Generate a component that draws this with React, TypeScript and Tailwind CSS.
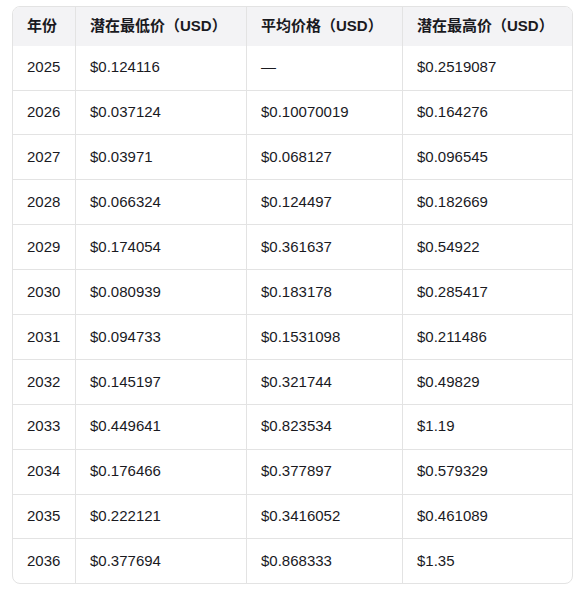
import React from "react";

const rows: [string, string, string, string][] = [
  ["2025", "$0.124116", "—", "$0.2519087"],
  ["2026", "$0.037124", "$0.10070019", "$0.164276"],
  ["2027", "$0.03971", "$0.068127", "$0.096545"],
  ["2028", "$0.066324", "$0.124497", "$0.182669"],
  ["2029", "$0.174054", "$0.361637", "$0.54922"],
  ["2030", "$0.080939", "$0.183178", "$0.285417"],
  ["2031", "$0.094733", "$0.1531098", "$0.211486"],
  ["2032", "$0.145197", "$0.321744", "$0.49829"],
  ["2033", "$0.449641", "$0.823534", "$1.19"],
  ["2034", "$0.176466", "$0.377897", "$0.579329"],
  ["2035", "$0.222121", "$0.3416052", "$0.461089"],
  ["2036", "$0.377694", "$0.868333", "$1.35"],
];

const headers = ["年份", "潜在最低价（USD）", "平均价格（USD）", "潜在最高价（USD）"];

export default function App() {
  return (
    <div
      className="bg-white w-[579px] h-[594px] pt-[6px] pl-[12px]"
      style={{ fontFamily: '"Liberation Sans", Arial, "Noto Sans CJK SC", sans-serif' }}
    >
      <div className="w-[561px] border border-[#e3e3e3] rounded-[8px] overflow-hidden text-[15px] text-[#1a1a1f]">
        <div className="grid grid-cols-[62px_171px_156px_170px] bg-[#f3f3f5] h-[38.5px]">
          {headers.map((h, i) => (
            <div
              key={i}
              className={`flex items-center px-[14px] font-bold ${i > 0 ? "border-l border-[#e3e3e3]" : ""}`}
            >
              {h}
            </div>
          ))}
        </div>
        {rows.map((r, ri) => (
          <div
            key={ri}
            className={`grid grid-cols-[62px_171px_156px_170px] ${ri > 0 ? "border-t border-[#e3e3e3] h-[44.9px]" : "h-[44px]"}`}
          >
            {r.map((c, i) => (
              <div
                key={i}
                className={`flex items-center px-[14px] ${i > 0 ? "border-l border-[#e3e3e3]" : ""}`}
              >
                {c}
              </div>
            ))}
          </div>
        ))}
      </div>
    </div>
  );
}
